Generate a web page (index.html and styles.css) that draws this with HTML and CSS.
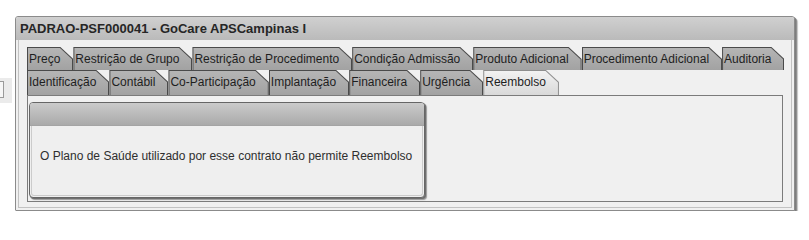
FILE: index.html
```html
<!DOCTYPE html>
<html lang="pt-BR">
<head>
<meta charset="utf-8">
<title>Reembolso</title>
<link rel="stylesheet" href="styles.css">
</head>
<body>
<div class="page">
  <div class="strip"><div class="strip-box"></div></div>
  <div class="window">
    <div class="titlebar">PADRAO-PSF000041 - GoCare APSCampinas I</div>
    <div class="wbody">
      <div class="tabrow row1">
        <div class="tab"><span class="tab-label">Preço</span></div>
        <div class="tab"><span class="tab-label">Restrição de Grupo</span></div>
        <div class="tab"><span class="tab-label">Restrição de Procedimento</span></div>
        <div class="tab"><span class="tab-label">Condição Admissão</span></div>
        <div class="tab"><span class="tab-label">Produto Adicional</span></div>
        <div class="tab"><span class="tab-label">Procedimento Adicional</span></div>
        <div class="tab"><span class="tab-label">Auditoria</span></div>
      </div>
      <div class="tabrow row2">
        <div class="tab"><span class="tab-label">Identificação</span></div>
        <div class="tab"><span class="tab-label">Contábil</span></div>
        <div class="tab"><span class="tab-label">Co-Participação</span></div>
        <div class="tab"><span class="tab-label">Implantação</span></div>
        <div class="tab"><span class="tab-label">Financeira</span></div>
        <div class="tab"><span class="tab-label">Urgência</span></div>
        <div class="tab active"><span class="tab-label">Reembolso</span></div>
      </div>
      <div class="tabcontent">
        <div class="panel">
          <div class="panel-head"></div>
          <div class="panel-body">O Plano de Saúde utilizado por esse contrato não permite Reembolso</div>
        </div>
      </div>
    </div>
  </div>
</div>
</body>
</html>
```
FILE: styles.css
```css
html, body {
  margin: 0;
  padding: 0;
  background: #ffffff;
}

.page {
  display: flex;
  align-items: flex-start;
  padding-top: 16px;
  font-family: "Liberation Sans", Arial, sans-serif;
  font-size: 12px;
  color: #222;
}

.strip {
  width: 12px;
  height: 25px;
  margin-top: 62px;
  background: #ebebeb;
}

.strip-box {
  width: 3px;
  height: 15px;
  margin-top: 3px;
  background: #f6f6f6;
  border: 1px solid #9a9a9a;
  border-left: none;
}

.window {
  margin-left: 3px;
  width: 778px;
  border: 1px solid #8b8b8b;
  border-radius: 3px 3px 1px 1px;
  background: #f0f0f0;
  box-shadow: 1px 1px 0 #7d7d7d, 2px 2px 0 #8f8f8f, 3px 3px 1px #c4c4c4;
}

.titlebar {
  height: 23px;
  line-height: 23px;
  padding-left: 4px;
  font-size: 13px;
  font-weight: bold;
  color: #262626;
  background: linear-gradient(#d0d0d0, #bababa);
  border-radius: 2px 2px 0 0;
  white-space: nowrap;
}

.wbody {
  margin: 0 2px 2px 2px;
  padding: 7px 8px 5px 8px;
  border: 1px solid #c2c2c2;
  border-top: none;
}

.tabrow {
  display: flex;
}

.tab {
  background: #4a4a4a;
  padding: 1px 1px 0 1px;
  clip-path: polygon(0 0, calc(100% - 13px) 0, 100% 12px, 100% 100%, 0 100%);
}

.tab-label {
  display: block;
  height: 22px;
  line-height: 22px;
  padding: 0 12px 0 1px;
  white-space: nowrap;
  color: #1e1e1e;
  background: linear-gradient(#b5b5b5, #a2a2a2);
  clip-path: polygon(0 0, calc(100% - 12.4px) 0, 100% 11.4px, 100% 100%, 0 100%);
}

.row2 .tab-label {
  height: 24px;
}

.tab.active {
  background: #8e8e8e;
}

.tab.active .tab-label {
  background: linear-gradient(#f2f2f2, #d9d9d9);
}

.tabcontent {
  box-sizing: border-box;
  height: 107px;
  padding: 6px 0 0 1px;
  border: 1px solid #7b7b7b;
  background: #f0f0f0;
}

.panel {
  width: 394px;
  height: 94px;
  border: 1px solid #666666;
  border-radius: 4px;
  overflow: hidden;
  background: #efefef;
  box-shadow: 1px 1px 0 #6f6f6f, 2px 2px 1px #9a9a9a;
  display: flex;
  flex-direction: column;
}

.panel-head {
  height: 22px;
  background: linear-gradient(#cbcbcb, #aaaaaa);
  border-bottom: 1px solid #a4a4a4;
}

.panel-body {
  flex: 1;
  margin: 0 1px 1px 1px;
  padding: 22px 0 0 8px;
  line-height: 16px;
  color: #2e2e2e;
  border: 1px solid #cbcbcb;
  border-top: none;
  border-radius: 0 0 3px 3px;
  white-space: nowrap;
}
```
